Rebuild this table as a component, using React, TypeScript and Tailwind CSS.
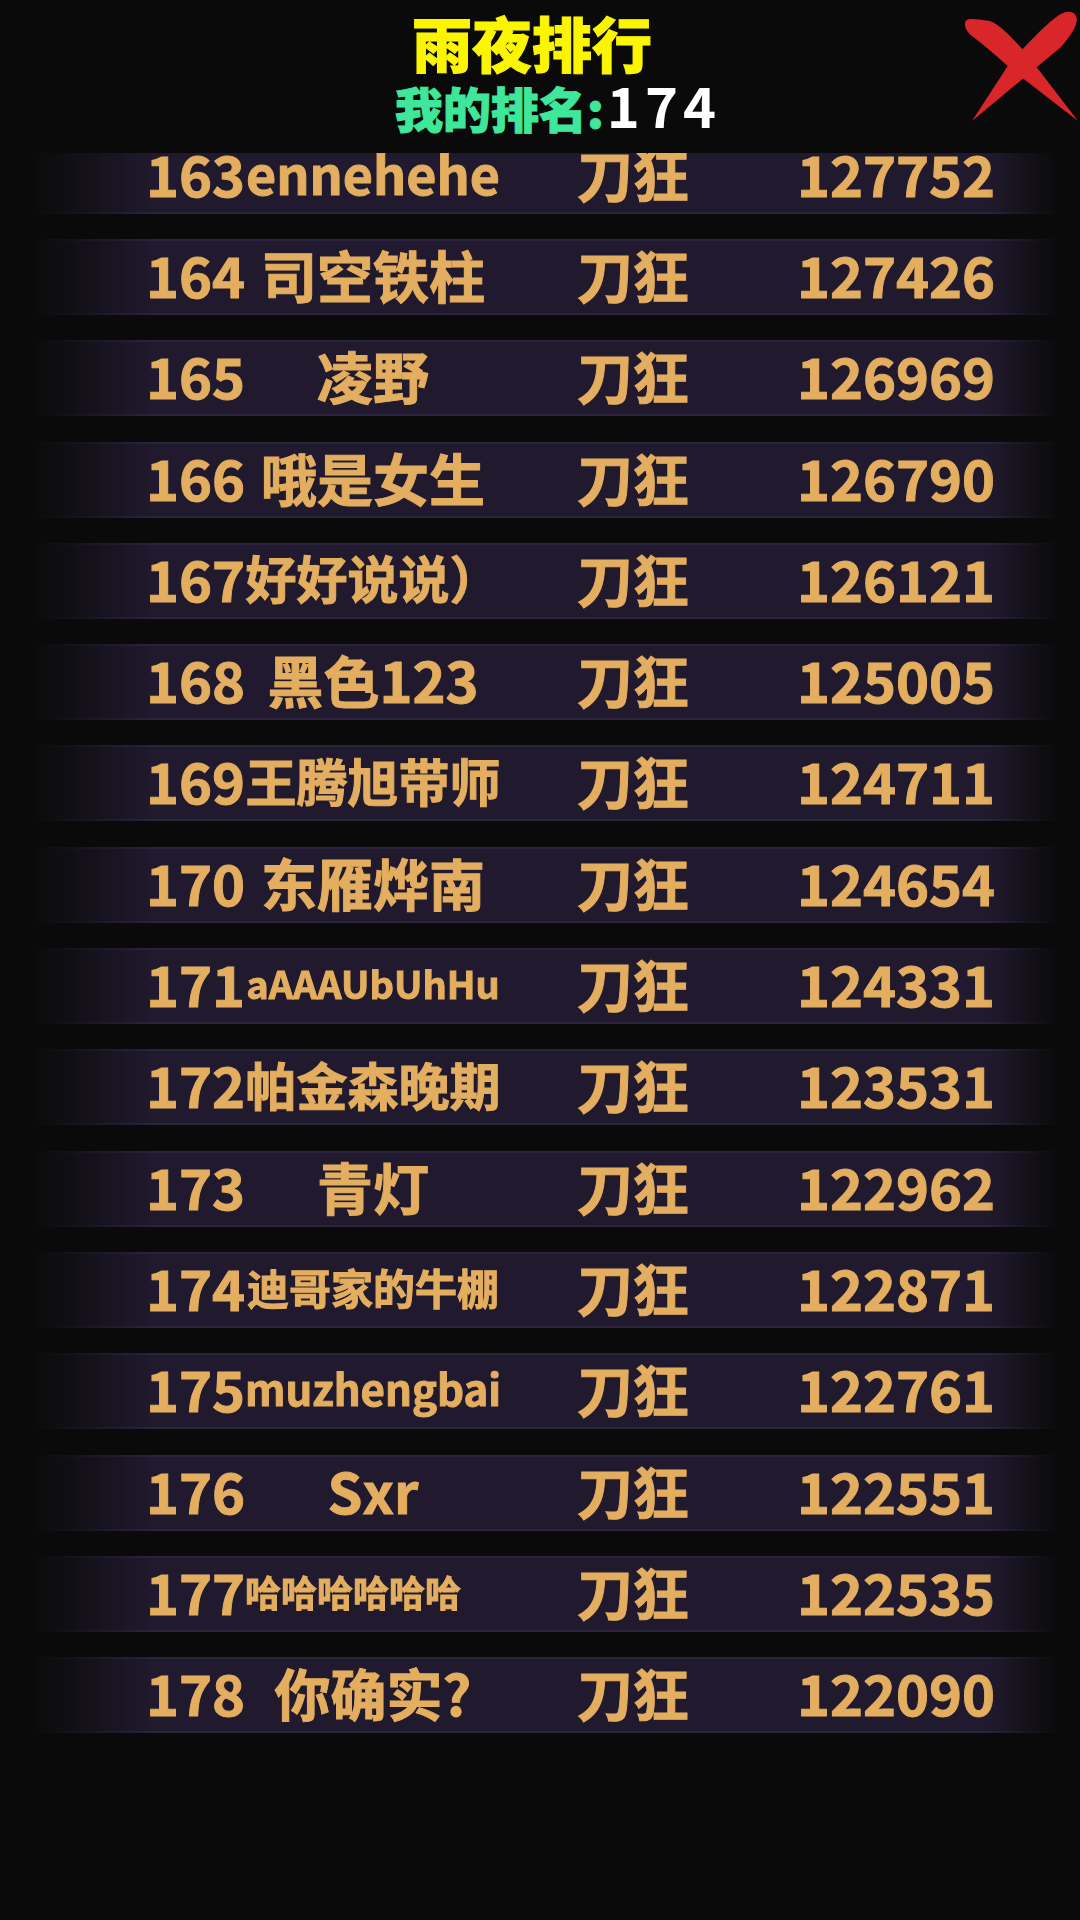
import { useLayoutEffect, useRef, useState } from 'react';

type Row = { rank: number; name: string; score: number; size?: number; left?: boolean };

const rows: Row[] = [
  { rank: 163, name: 'ennehehe', score: 127752 },
  { rank: 164, name: '司空铁柱', score: 127426 },
  { rank: 165, name: '凌野', score: 126969 },
  { rank: 166, name: '哦是女生', score: 126790 },
  { rank: 167, name: '好好说说）', score: 126121 },
  { rank: 168, name: '黑色123', score: 125005 },
  { rank: 169, name: '王腾旭带师', score: 124711 },
  { rank: 170, name: '东雁烨南', score: 124654 },
  { rank: 171, name: 'aAAAUbUhHu', score: 124331 },
  { rank: 172, name: '帕金森晚期', score: 123531 },
  { rank: 173, name: '青灯', score: 122962 },
  { rank: 174, name: '迪哥家的牛棚', score: 122871 },
  { rank: 175, name: 'muzhengbai', score: 122761 },
  { rank: 176, name: 'Sxr', score: 122551 },
  { rank: 177, name: '哈哈哈哈哈哈', score: 122535, size: 36, left: true },
  { rank: 178, name: '你确实?', score: 122090 },
];

const NAME_COL = 256;
const MAX_SIZE = 56;

// shrinks long names until they fit the column (like a "best fit" text box)
function FitName({ text, fixed }: { text: string; fixed?: number }) {
  const ref = useRef<HTMLSpanElement>(null);
  const [size, setSize] = useState(fixed ?? MAX_SIZE);

  useLayoutEffect(() => {
    if (fixed) return;
    const measure = () => {
      const el = ref.current;
      if (!el) return;
      const fs = parseFloat(getComputedStyle(el).fontSize) || MAX_SIZE;
      const natural = (el.scrollWidth * MAX_SIZE) / fs;
      setSize(natural > NAME_COL ? Math.floor((MAX_SIZE * NAME_COL) / natural) : MAX_SIZE);
    };
    measure();
    document.fonts?.ready.then(measure);
  }, [text, fixed]);

  return (
    <span ref={ref} className="inline-block whitespace-nowrap leading-none" style={{ fontSize: size }}>
      {text}
    </span>
  );
}

function RedCross() {
  return (
    <svg viewBox="0 0 115 112" className="absolute left-[965px] top-[11px] w-[115px] h-[112px]">
      <path
        d="M0 13 C0 6 8 8 25 10 C36 14 50 30 60 41 L113 110 L47 59 C34 47 20 35 7 25 C2 21 0 17 0 13 Z"
        fill="#d8262a"
      />
      <path
        d="M94 4 C100 0 108 -1 111 5 C114 12 108 22 96 36 L7 110 L44 53 C60 35 80 14 94 4 Z"
        fill="#d8262a"
      />
    </svg>
  );
}

export default function App() {
  return (
    <div
      className="relative w-[1080px] h-[1920px] bg-[#0a0a0a] overflow-hidden"
      style={{ fontFamily: '"Noto Sans CJK SC", "Noto Sans", sans-serif' }}
    >
      {/* header */}
      <div className="relative z-10 h-[153px] flex flex-col items-center bg-[#0a0a0a]">
        <h1 className="mt-[12px] mr-[16px] h-[60px] text-[60px] leading-[60px] font-black text-[#fbf600] [-webkit-text-stroke:1px_#fbf600]">
          雨夜排行
        </h1>
        <div className="mt-[11px] ml-[36px] h-[48px] flex items-center">
          <span className="text-[48px] leading-[48px] font-black text-[#3fe79b] [-webkit-text-stroke:1px_#3fe79b]">我的排名:</span>
          <span className="ml-[3px] text-[56px] leading-[48px] font-bold text-white tracking-[5px] -mt-[6px]">174</span>
        </div>
        <RedCross />
      </div>

      {/* list */}
      <div className="h-[1767px] overflow-hidden">
        <div className="-mt-[15.3px] flex flex-col gap-[25.3px]">
          {rows.map((r) => (
            <div
              key={r.rank}
              className="ml-[30px] w-[1030px] h-[76px] bg-[#2c2340] py-[2px] [mask-image:linear-gradient(to_right,transparent,black_12%,black_93%,transparent)]"
            >
              <div className="h-full bg-[#211a2e] flex items-center pb-[6px] pl-[116px] text-[56px] leading-none font-bold text-[#e3ae5f] [-webkit-text-stroke:1px_#e3ae5f]">
                <span className="w-[99px] whitespace-nowrap">{r.rank}</span>
                <span className={`w-[256px] flex ${r.left ? 'justify-start' : 'justify-center'}`}>
                  <FitName text={r.name} fixed={r.size} />
                </span>
                <span className="w-[264px] text-center">刀狂</span>
                <span className="w-[262px] text-center">{r.score}</span>
              </div>
            </div>
          ))}
        </div>
      </div>
    </div>
  );
}
